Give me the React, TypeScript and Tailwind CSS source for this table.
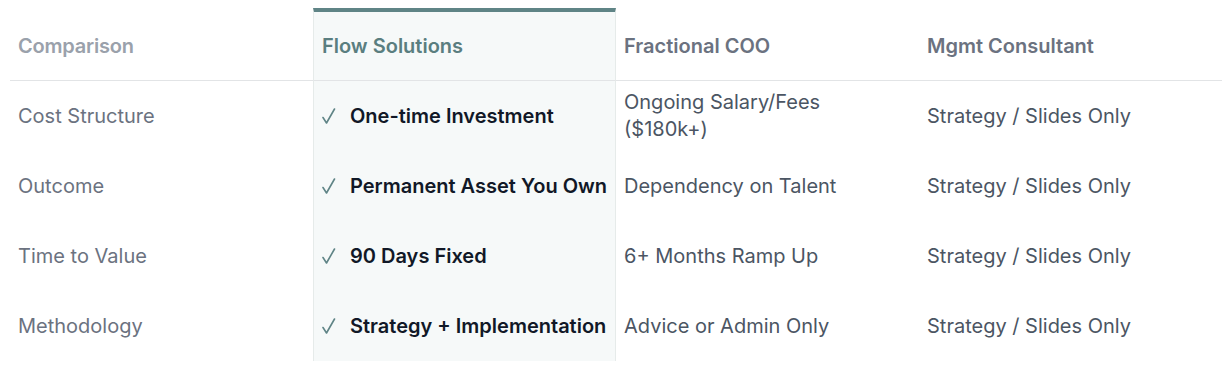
import React from "react";

const rows = [
  { label: "Cost Structure", flow: "One-time Investment", coo: "Ongoing Salary/Fees ($180k+)", mgmt: "Strategy / Slides Only" },
  { label: "Outcome", flow: "Permanent Asset You Own", coo: "Dependency on Talent", mgmt: "Strategy / Slides Only" },
  { label: "Time to Value", flow: "90 Days Fixed", coo: "6+ Months Ramp Up", mgmt: "Strategy / Slides Only" },
  { label: "Methodology", flow: "Strategy + Implementation", coo: "Advice or Admin Only", mgmt: "Strategy / Slides Only" },
];

function Check() {
  return (
    <svg width="14" height="16" viewBox="0 0 14 16" className="shrink-0">
      <path d="M1 9.5 L4.5 15 L12.5 1" fill="none" stroke="#5f8486" strokeWidth="1.6" strokeLinecap="round" strokeLinejoin="round" />
    </svg>
  );
}

export default function App() {
  return (
    <div className="w-[1232px] h-[367px] bg-white overflow-hidden" style={{ fontFamily: "Inter, 'Noto Sans', sans-serif" }}>
      <div className="mx-[10px] mt-[8px] grid grid-cols-4">
        {/* header */}
        <div className="h-[73px] pt-[4px] px-2 flex items-center border-b border-[#e2e4e6] text-[20px] font-semibold tracking-[-0.2px] text-[#9aa1ab]">Comparison</div>
        <div className="h-[73px] px-2 flex items-center border-t-4 border-t-[#5f8486] border-x border-x-[#e6ebea] border-b border-b-[#e2e4e6] bg-[#f6f9f9] text-[20px] font-semibold text-[#5a7e80]">Flow Solutions</div>
        <div className="h-[73px] pt-[4px] px-2 flex items-center border-b border-[#e2e4e6] text-[20px] font-semibold text-[#6b7280]">Fractional COO</div>
        <div className="h-[73px] pt-[4px] px-2 flex items-center border-b border-[#e2e4e6] text-[20px] font-semibold text-[#6b7280]">Mgmt Consultant</div>
        {rows.map((r) => (
          <React.Fragment key={r.label}>
            <div className="h-[70px] px-2 flex items-center text-[20px] text-[#6b7280]">{r.label}</div>
            <div className="h-[70px] px-2 flex items-center gap-[14px] border-x border-[#e6ebea] bg-[#f6f9f9] text-[20px]">
              <Check />
              <span className="font-semibold whitespace-nowrap text-[#111827]">{r.flow}</span>
            </div>
            <div className="h-[70px] px-2 flex items-center text-[20px] leading-[27px] text-[#4b5563]">
              <span className="max-w-[230px]">{r.coo}</span>
            </div>
            <div className="h-[70px] px-2 flex items-center text-[20px] text-[#4b5563]">{r.mgmt}</div>
          </React.Fragment>
        ))}
      </div>
    </div>
  );
}
